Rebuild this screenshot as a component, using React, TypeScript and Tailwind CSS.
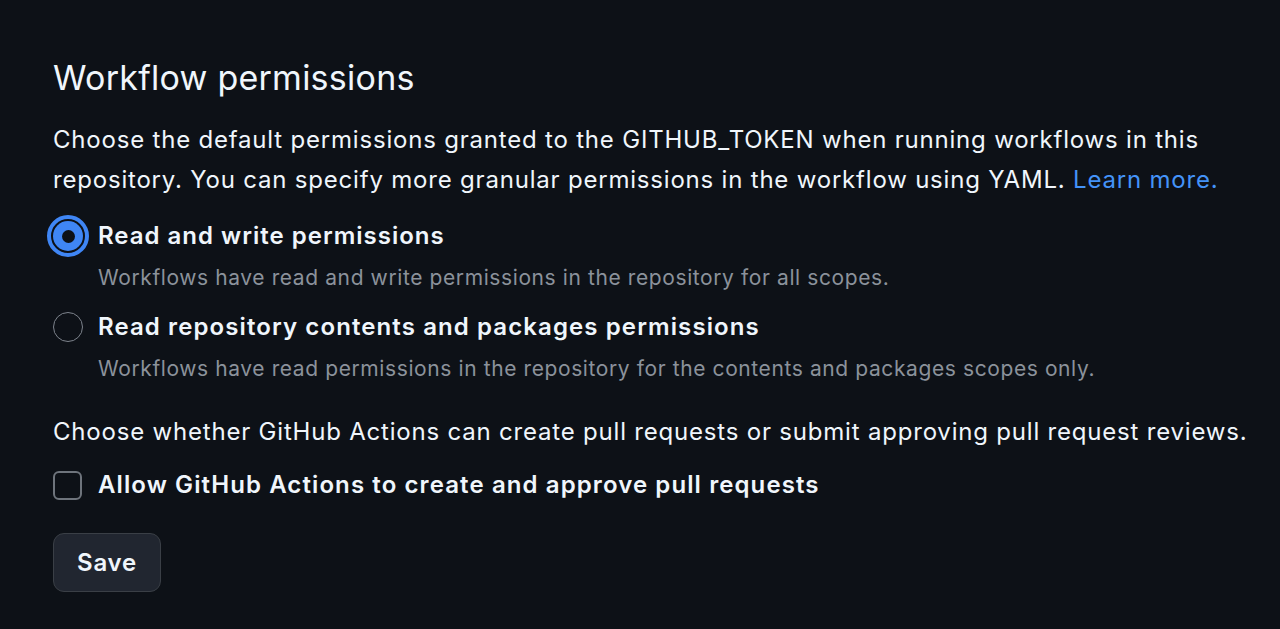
export default function App() {
  return (
    <div className="min-h-screen bg-[#0d1117] pt-[56px] pr-[20px] pl-[53px] font-['Inter','Noto_Sans',sans-serif] text-[#f0f6fc] antialiased">
      <h2 className="text-[34px] leading-[44px] font-normal tracking-[0.25px]">Workflow permissions</h2>
      <p className="mt-[20px] w-[1200px] text-[24px] leading-[40px] tracking-[0.8px]">
        Choose the default permissions granted to the GITHUB_TOKEN when running workflows in this repository. You can
        specify more granular permissions in the workflow using YAML. <a href="#" className="text-[#4493f8]">Learn more.</a>
      </p>

      <div className="mt-[18px]">
        <label className="flex items-start gap-[15px]">
          <span className="mt-[3px] flex h-[30px] w-[30px] shrink-0 items-center justify-center rounded-full bg-[#3f86f5] outline-[4px] outline-offset-[2px] outline-[#3f86f5] outline-solid">
            <span className="h-[13px] w-[13px] rounded-full bg-[#0d1117]" />
          </span>
          <span>
            <span className="block text-[24px] leading-[36px] font-semibold tracking-[1px]">Read and write permissions</span>
            <span className="mt-[8px] block text-[21px] leading-[32px] tracking-[0.6px] text-[#8b929b]">
              Workflows have read and write permissions in the repository for all scopes.
            </span>
          </span>
        </label>

        <label className="mt-[15px] flex items-start gap-[15px]">
          <span className="mt-[3px] h-[30px] w-[30px] shrink-0 rounded-full border-[1.5px] border-[#7d838c]" />
          <span>
            <span className="block text-[24px] leading-[36px] font-semibold tracking-[1.1px]">
              Read repository contents and packages permissions
            </span>
            <span className="mt-[8px] block text-[21px] leading-[32px] tracking-[0.6px] text-[#8b929b]">
              Workflows have read permissions in the repository for the contents and packages scopes only.
            </span>
          </span>
        </label>
      </div>

      <p className="mt-[27px] w-[1210px] text-[24px] leading-[40px] tracking-[0.8px]">
        Choose whether GitHub Actions can create pull requests or submit approving pull request reviews.
      </p>

      <label className="mt-[15px] flex items-center gap-[16px]">
        <span className="h-[29px] w-[29px] shrink-0 rounded-[6px] border-2 border-[#6e747c]" />
        <span className="text-[24px] leading-[36px] font-semibold tracking-[1.1px]">
          Allow GitHub Actions to create and approve pull requests
        </span>
      </label>

      <button className="mt-[30px] h-[59px] w-[108px] rounded-[11px] border-[1.5px] border-[#3a3f46] bg-[#212630] text-[24px] font-semibold tracking-[0.8px] text-[#f0f6fc]">
        Save
      </button>
    </div>
  );
}
